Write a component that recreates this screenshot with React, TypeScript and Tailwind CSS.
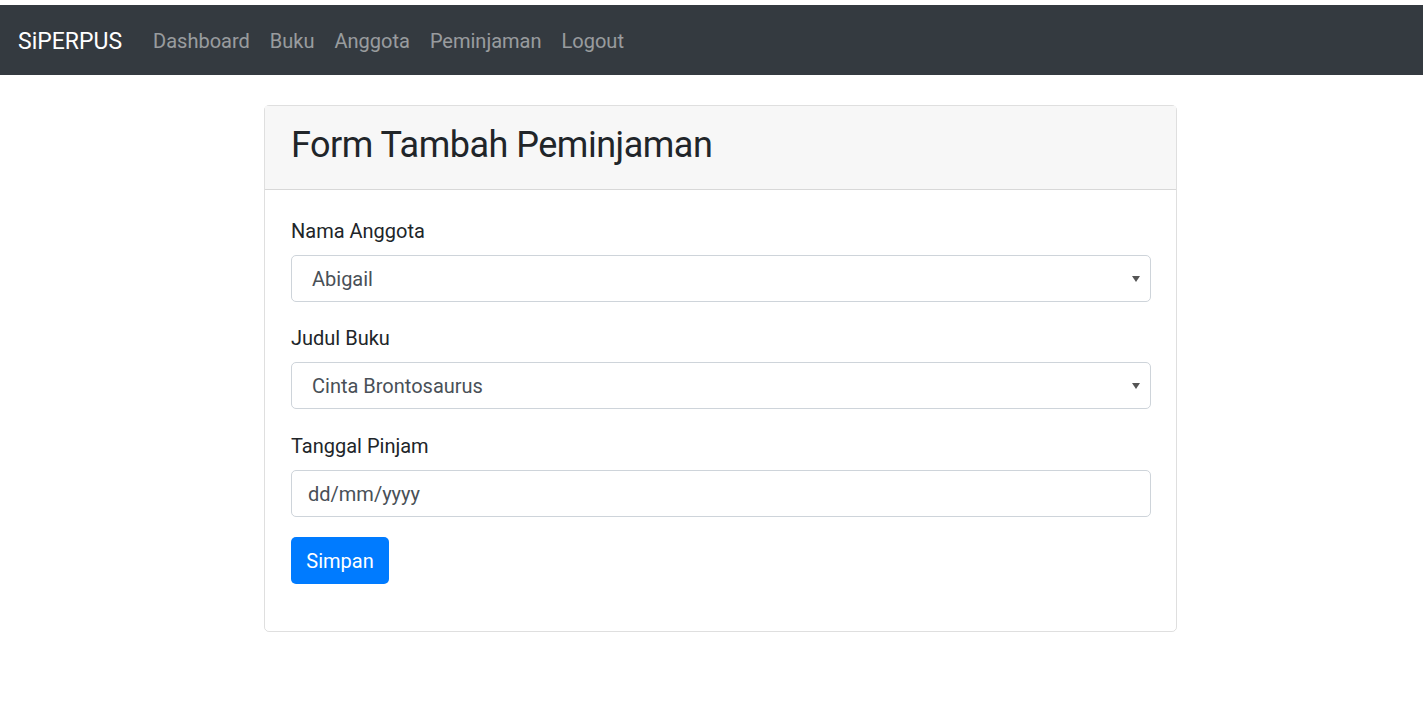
export default function App() {
  const font = { fontFamily: 'Roboto, "Noto Sans", sans-serif' }
  return (
    <div className="min-h-[712px] bg-white pt-[5px] text-[#212529]" style={font}>
      <nav className="flex h-[70px] items-center bg-[#343a40] px-[18px] pt-[2px]">
        <span className="mr-[21px] text-[23px] leading-[37px] text-white">SiPERPUS</span>
        <ul className="flex text-[20px] leading-[30px] text-white/50">
          <li className="px-[10px]">Dashboard</li>
          <li className="px-[10px]">Buku</li>
          <li className="px-[10px]">Anggota</li>
          <li className="px-[10px]">Peminjaman</li>
          <li className="px-[10px]">Logout</li>
        </ul>
      </nav>

      <div className="ml-[264px] mt-[30px] w-[913px] rounded-[5px] border border-black/[0.125]">
        <div className="border-b border-black/[0.125] bg-[#f7f7f7] px-[26px] pb-5 pt-[15px]">
          <h2 className="text-[36px] font-normal leading-[48px] tracking-[-0.5px]">Form Tambah Peminjaman</h2>
        </div>
        <div className="pb-[22px] pl-[26px] pr-[25px] pt-[25px] text-[20px]">
          <div className="mb-5">
            <label className="mb-[9px] block pt-px leading-[30px]">Nama Anggota</label>
            <SelectBox value="Abigail" />
          </div>
          <div className="mb-[21px]">
            <label className="mb-[9px] block pt-px leading-[30px]">Judul Buku</label>
            <SelectBox value="Cinta Brontosaurus" />
          </div>
          <div className="mb-5">
            <label className="mb-[9px] block pt-px leading-[30px]">Tanggal Pinjam</label>
            <div className="flex h-[47px] items-center rounded-[5px] border border-[#ced4da] px-4 text-[#495057]">
              dd/mm/yyyy
            </div>
          </div>
          <div className="mb-[25px]">
            <button className="h-[47px] w-[98px] rounded-[5px] bg-[#007bff] text-[20px] text-white">Simpan</button>
          </div>
        </div>
      </div>
    </div>
  )
}

function SelectBox({ value }: { value: string }) {
  return (
    <div className="flex h-[47px] items-center justify-between rounded-[5px] border border-[#ced4da] pl-5 pr-[10px] text-[#495057]">
      <span>{value}</span>
      <svg width="8" height="6" viewBox="0 0 8 6" className="mt-[1px]">
        <path d="M0 0h8L4 6z" fill="#555" />
      </svg>
    </div>
  )
}
